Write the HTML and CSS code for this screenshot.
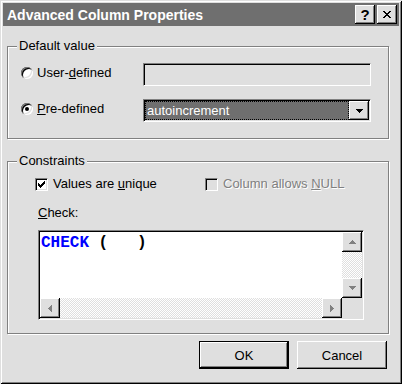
FILE: index.html
```html
<!DOCTYPE html>
<html lang="en">
<head>
    <meta charset="UTF-8">
    <title>Advanced Column Properties</title>
    <link rel="stylesheet" href="styles.css">
</head>
<body>
    <div class="window">
        <div class="title-bar">
            <span class="title-text">Advanced Column Properties</span>
            <div class="title-buttons">
                <button class="title-button help-button">?</button>
                <button class="title-button close-button">
                    <svg width="8" height="7" viewBox="0 0 8 7" shape-rendering="crispEdges">
                        <path d="M0 0h2v1H0zM6 0h2v1H6zM1 1h2v1H1zM5 1h2v1H5zM2 2h4v1H2zM3 3h2v1H3zM2 4h4v1H2zM1 5h2v1H1zM5 5h2v1H5zM0 6h2v1H0zM6 6h2v1H6z"/>
                    </svg>
                </button>
            </div>
        </div>

        <div class="dialog-body">
            <div class="group-box default-group">
                <span class="group-label">Default value</span>
                <div class="option-row">
                    <label class="radio"><span class="radio-mark"></span><span>User-<u>d</u>efined</span></label>
                    <div class="text-field"></div>
                </div>
                <div class="option-row">
                    <label class="radio"><span class="radio-mark checked"></span><span><u>P</u>re-defined</span></label>
                    <div class="combo-box">
                        <div class="combo-value">autoincrement</div>
                        <div class="combo-button">
                            <svg width="7" height="4" viewBox="0 0 7 4" shape-rendering="crispEdges">
                                <path d="M0 0h7v1H6v1H5v1H4v1H3V3H2V2H1V1H0z"/>
                            </svg>
                        </div>
                    </div>
                </div>
            </div>

            <div class="group-box constraints-group">
                <span class="group-label">Constraints</span>
                <div class="check-row">
                    <label class="check-option unique-option">
                        <span class="check-mark">
                            <svg width="7" height="7" viewBox="0 0 7 7" shape-rendering="crispEdges">
                                <path d="M6 0h1v3H6zM5 1h1v3H5zM4 2h1v3H4zM3 3h1v3H3zM2 4h1v3H2zM1 3h1v3H1zM0 2h1v3H0z"/>
                            </svg>
                        </span>
                        <span>Values are <u>u</u>nique</span>
                    </label>
                    <label class="check-option disabled">
                        <span class="check-mark"></span>
                        <span>Column allows <u>N</u>ULL</span>
                    </label>
                </div>
                <div class="check-label"><u>C</u>heck:</div>
                <div class="editor">
                    <div class="editor-text"><span class="keyword">CHECK</span> (   )</div>
                    <div class="scrollbar vertical">
                        <div class="scroll-button">
                            <svg width="7" height="4" viewBox="0 0 7 4" shape-rendering="crispEdges">
                                <path d="M3 0h1v1h1v1h1v1h1v1H0V3h1V2h1V1h1z"/>
                            </svg>
                        </div>
                        <div class="scroll-track"></div>
                        <div class="scroll-button">
                            <svg width="7" height="4" viewBox="0 0 7 4" shape-rendering="crispEdges">
                                <path d="M0 0h7v1H6v1H5v1H4v1H3V3H2V2H1V1H0z"/>
                            </svg>
                        </div>
                    </div>
                    <div class="scrollbar horizontal">
                        <div class="scroll-button">
                            <svg width="4" height="7" viewBox="0 0 4 7" shape-rendering="crispEdges">
                                <path d="M3 0h1v7H3V6H2V5H1V4H0V3h1V2h1V1h1z"/>
                            </svg>
                        </div>
                        <div class="scroll-track"></div>
                        <div class="scroll-button">
                            <svg width="4" height="7" viewBox="0 0 4 7" shape-rendering="crispEdges">
                                <path d="M0 0h1v1h1v1h1v1h1v1H3v1H2v1H1v1H0z"/>
                            </svg>
                        </div>
                    </div>
                    <div class="scroll-corner"></div>
                </div>
            </div>

            <div class="button-row">
                <button class="push-button default-button">OK</button>
                <button class="push-button">Cancel</button>
            </div>
        </div>
    </div>
</body>
</html>
```

FILE: styles.css
```css
* {
    margin: 0;
    padding: 0;
    box-sizing: border-box;
}

body {
    font-family: "Liberation Sans", Arial, sans-serif;
    font-size: 13px;
    line-height: 16px;
    color: #000;
    background: #dfdfdf;
}

.window {
    width: 402px;
    height: 384px;
    padding: 3px;
    display: flex;
    flex-direction: column;
    background: #dfdfdf;
    box-shadow: inset 1px 1px 0 #dfdfdf, inset -1px -1px 0 #000, inset 2px 2px 0 #fff, inset -2px -2px 0 #808080;
}

/* title bar */
.title-bar {
    height: 23px;
    padding: 0 2px 0 4px;
    display: flex;
    align-items: center;
    justify-content: space-between;
    background: #6f6f6f;
}

.title-text {
    color: #fff;
    font-size: 14px;
    font-weight: bold;
}

.title-buttons {
    display: flex;
    gap: 2px;
}

.title-button {
    width: 20px;
    height: 19px;
    border: none;
    display: flex;
    align-items: center;
    justify-content: center;
    background: #dfdfdf;
    font: bold 15px "Liberation Sans", Arial, sans-serif;
    color: #000;
    box-shadow: inset -1px -1px 0 #000, inset 1px 1px 0 #fff, inset -2px -2px 0 #808080;
}

.dialog-body {
    padding: 20px 10px 0 4px;
    display: flex;
    flex-direction: column;
}

/* group boxes */
.group-box {
    position: relative;
    border: 1px solid #808080;
    box-shadow: inset 1px 1px 0 #fff, 1px 1px 0 #fff;
}

.group-label {
    position: absolute;
    top: -9px;
    left: 9px;
    padding: 0 2px;
    background: #dfdfdf;
}

.default-group {
    height: 93px;
    padding: 16px 17px 0 13px;
    display: flex;
    flex-direction: column;
    gap: 13px;
}

.option-row {
    display: flex;
    align-items: flex-start;
}

.radio {
    width: 122px;
    margin-top: 2px;
    display: flex;
    align-items: center;
    gap: 4px;
}

.radio-mark {
    position: relative;
    width: 12px;
    height: 12px;
    border-radius: 50%;
    background: #fff;
    box-shadow: inset 1px 1px 0 #808080, inset -1px -1px 0 #fff, inset 2px 2px 0 #000, inset -2px -2px 0 #dfdfdf;
}

.radio-mark.checked::after {
    content: '';
    position: absolute;
    top: 4px;
    left: 4px;
    width: 4px;
    height: 4px;
    border-radius: 50%;
    background: #000;
}

.text-field,
.combo-box {
    width: 228px;
    height: 23px;
    border: 1px solid;
    border-color: #808080 #fff #fff #808080;
    padding: 1px;
    box-shadow: inset 1px 1px 0 #000, inset -1px -1px 0 #dfdfdf;
    background: #dfdfdf;
}

.combo-box {
    display: flex;
}

.combo-value {
    flex: 1;
    padding-left: 1px;
    border: 1px dotted #000;
    background: #6f6f6f;
    color: #fff;
    line-height: 17px;
}

.combo-button {
    width: 20px;
    display: flex;
    align-items: center;
    justify-content: center;
    background: #dfdfdf;
    box-shadow: inset -1px -1px 0 #000, inset 1px 1px 0 #fff, inset -2px -2px 0 #808080;
}

/* constraints */
.constraints-group {
    margin-top: 22px;
    height: 173px;
    padding: 14px 0 0 27px;
}

.check-row {
    height: 16px;
    display: flex;
    align-items: center;
}

.check-option {
    display: flex;
    align-items: center;
    gap: 5px;
}

.unique-option {
    width: 170px;
}

.check-mark {
    width: 13px;
    height: 13px;
    display: flex;
    align-items: center;
    justify-content: center;
    border: 1px solid;
    border-color: #808080 #fff #fff #808080;
    background: #fff;
    box-shadow: inset 1px 1px 0 #000, inset -1px -1px 0 #dfdfdf;
}

.check-option.disabled {
    color: #808080;
    text-shadow: 1px 1px 0 #fff;
}

.check-option.disabled .check-mark {
    background: #dfdfdf;
}

.check-label {
    margin: 13px 0 0 3px;
}

.editor {
    width: 326px;
    height: 90px;
    margin: 9px 0 0 3px;
    padding: 1px;
    display: grid;
    grid-template-columns: 1fr 20px;
    grid-template-rows: 1fr 20px;
    border: 1px solid;
    border-color: #808080 #fff #fff #808080;
    background: #fff;
    box-shadow: inset 1px 1px 0 #000, inset -1px -1px 0 #dfdfdf;
}

.editor-text {
    padding: 2px 0 0 1px;
    font-family: "Liberation Mono", "Courier New", monospace;
    font-size: 16px;
    font-weight: bold;
    line-height: 18px;
    white-space: pre;
}

.keyword {
    color: #0000ff;
}

.scrollbar {
    display: flex;
}

.scrollbar.vertical {
    flex-direction: column;
}

.scroll-button {
    width: 20px;
    height: 20px;
    flex-shrink: 0;
    display: flex;
    align-items: center;
    justify-content: center;
    background: #dfdfdf;
    fill: #808080;
    box-shadow: inset -1px -1px 0 #000, inset 1px 1px 0 #fff, inset -2px -2px 0 #808080;
}

.scroll-track {
    flex: 1;
    background-image: conic-gradient(#dfdfdf 25%, #fff 0 50%, #dfdfdf 0 75%, #fff 0);
    background-size: 2px 2px;
}

.scroll-corner {
    background: #dfdfdf;
}

/* dialog buttons */
.button-row {
    margin: 7px 2px 0 0;
    display: flex;
    justify-content: flex-end;
    gap: 8px;
}

.push-button {
    width: 90px;
    height: 28px;
    border: none;
    background: #dfdfdf;
    font: 13px "Liberation Sans", Arial, sans-serif;
    color: #000;
    box-shadow: inset -1px -1px 0 #000, inset 1px 1px 0 #fff, inset -2px -2px 0 #808080;
}

.default-button {
    border: 1px solid #000;
}
```
